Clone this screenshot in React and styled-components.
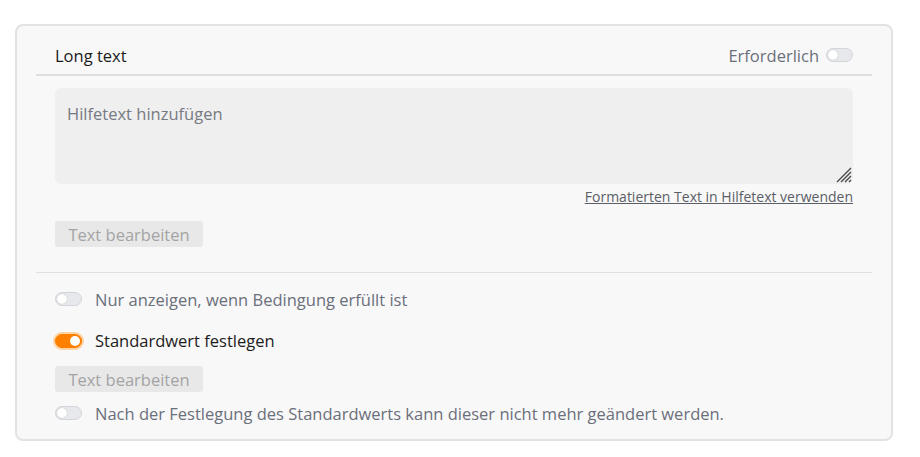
import styled, { createGlobalStyle } from 'styled-components';

const GlobalStyle = createGlobalStyle`
  html, body {
    margin: 0;
    padding: 0;
    background: #ffffff;
  }
  body {
    font-family: "Open Sans", "Noto Sans", sans-serif;
  }
`;

const Page = styled.div`
  padding: 24px 27px 0 15px;
`;

const Card = styled.div`
  background: #f8f8f8;
  border: 2px solid #e2e2e2;
  border-radius: 8px;
  padding: 0 19px 12px 19px;
  height: 417px;
  box-sizing: border-box;
`;

const Header = styled.div`
  display: flex;
  align-items: center;
  justify-content: space-between;
  height: 50px;
  padding: 10px 19px 0 19px;
  box-sizing: border-box;
  border-bottom: 2px solid #dedede;
`;

const Title = styled.span`
  font-size: 16.5px;
  color: #1b1b1b;
`;

const Required = styled.label`
  display: flex;
  align-items: center;
  gap: 7px;
  font-size: 16.5px;
  color: #6b6f7b;
`;

const Section = styled.div`
  padding: 12px 19px 0 19px;
`;

const HelpArea = styled.div`
  position: relative;
  height: 96px;
  background: #efefef;
  border-radius: 6px;
  padding: 14px 12px;
  box-sizing: border-box;
  font-size: 16.5px;
  color: #777a82;
`;

const Grip = styled.svg`
  position: absolute;
  right: 1px;
  bottom: 1px;
`;

const LinkRow = styled.div`
  display: flex;
  justify-content: flex-end;
  margin-top: 3px;
`;

const HelpLink = styled.a`
  font-size: 14px;
  color: #5b5e66;
  text-decoration: underline;
`;

const EditButton = styled.button`
  display: block;
  font-family: inherit;
  font-size: 16.5px;
  color: #a4a4a4;
  background: #e8e8e8;
  border: none;
  border-radius: 3px;
  height: 26px;
  width: 148px;
  padding: 0;
  margin-top: ${p => p.$top || 0}px;
`;

const Divider = styled.div`
  height: 1px;
  background: #e0e0e0;
  margin-top: 25px;
`;

const Options = styled.div`
  padding: 0 19px;
`;

const OptionRow = styled.div`
  display: flex;
  align-items: center;
  gap: 13px;
  height: ${p => p.$h || 41}px;
  font-size: 16.5px;
  color: ${p => (p.$active ? '#1c1c1c' : '#6b6f7b')};
`;

const Track = styled.span`
  position: relative;
  display: inline-block;
  flex: none;
  width: 27px;
  height: 14px;
  border-radius: 8px;
  box-sizing: border-box;
  background: ${p => (p.$on ? '#ff7f00' : '#e7e8eb')};
  border: 1px solid ${p => (p.$on ? '#ff7f00' : '#d2d5da')};
  box-shadow: ${p => (p.$on ? '0 0 0 2px #ffd3a6' : 'none')};
`;

const Knob = styled.span`
  position: absolute;
  top: 1px;
  left: ${p => (p.$on ? '14px' : '1px')};
  width: 10px;
  height: 10px;
  border-radius: 50%;
  background: #ffffff;
  box-shadow: ${p => (p.$on ? 'none' : '0 0 1px #9aa0a8')};
`;

const Toggle = ({ on }) => (
  <Track $on={on}>
    <Knob $on={on} />
  </Track>
);

export default function App() {
  return (
    <Page>
      <GlobalStyle />
      <Card>
        <Header>
          <Title>Long text</Title>
          <Required>
            Erforderlich
            <Toggle />
          </Required>
        </Header>
        <Section>
          <HelpArea>
            Hilfetext hinzufügen
            <Grip width="18" height="18" viewBox="0 0 18 18">
              <path
                d="M17 3 L3 17 M17 7 L7 17 M17 11 L11 17 M17 15 L15 17"
                stroke="#4a4a4a"
                strokeWidth="1.4"
              />
            </Grip>
          </HelpArea>
          <LinkRow>
            <HelpLink>Formatierten Text in Hilfetext verwenden</HelpLink>
          </LinkRow>
          <EditButton $top={15}>Text bearbeiten</EditButton>
        </Section>
        <Divider />
        <Options>
          <OptionRow $h={52}>
            <Toggle />
            Nur anzeigen, wenn Bedingung erfüllt ist
          </OptionRow>
          <OptionRow $h={31} $active>
            <Toggle on />
            Standardwert festlegen
          </OptionRow>
          <EditButton $top={10}>Text bearbeiten</EditButton>
          <OptionRow $h={42}>
            <Toggle />
            Nach der Festlegung des Standardwerts kann dieser nicht mehr geändert werden.
          </OptionRow>
        </Options>
      </Card>
    </Page>
  );
}
